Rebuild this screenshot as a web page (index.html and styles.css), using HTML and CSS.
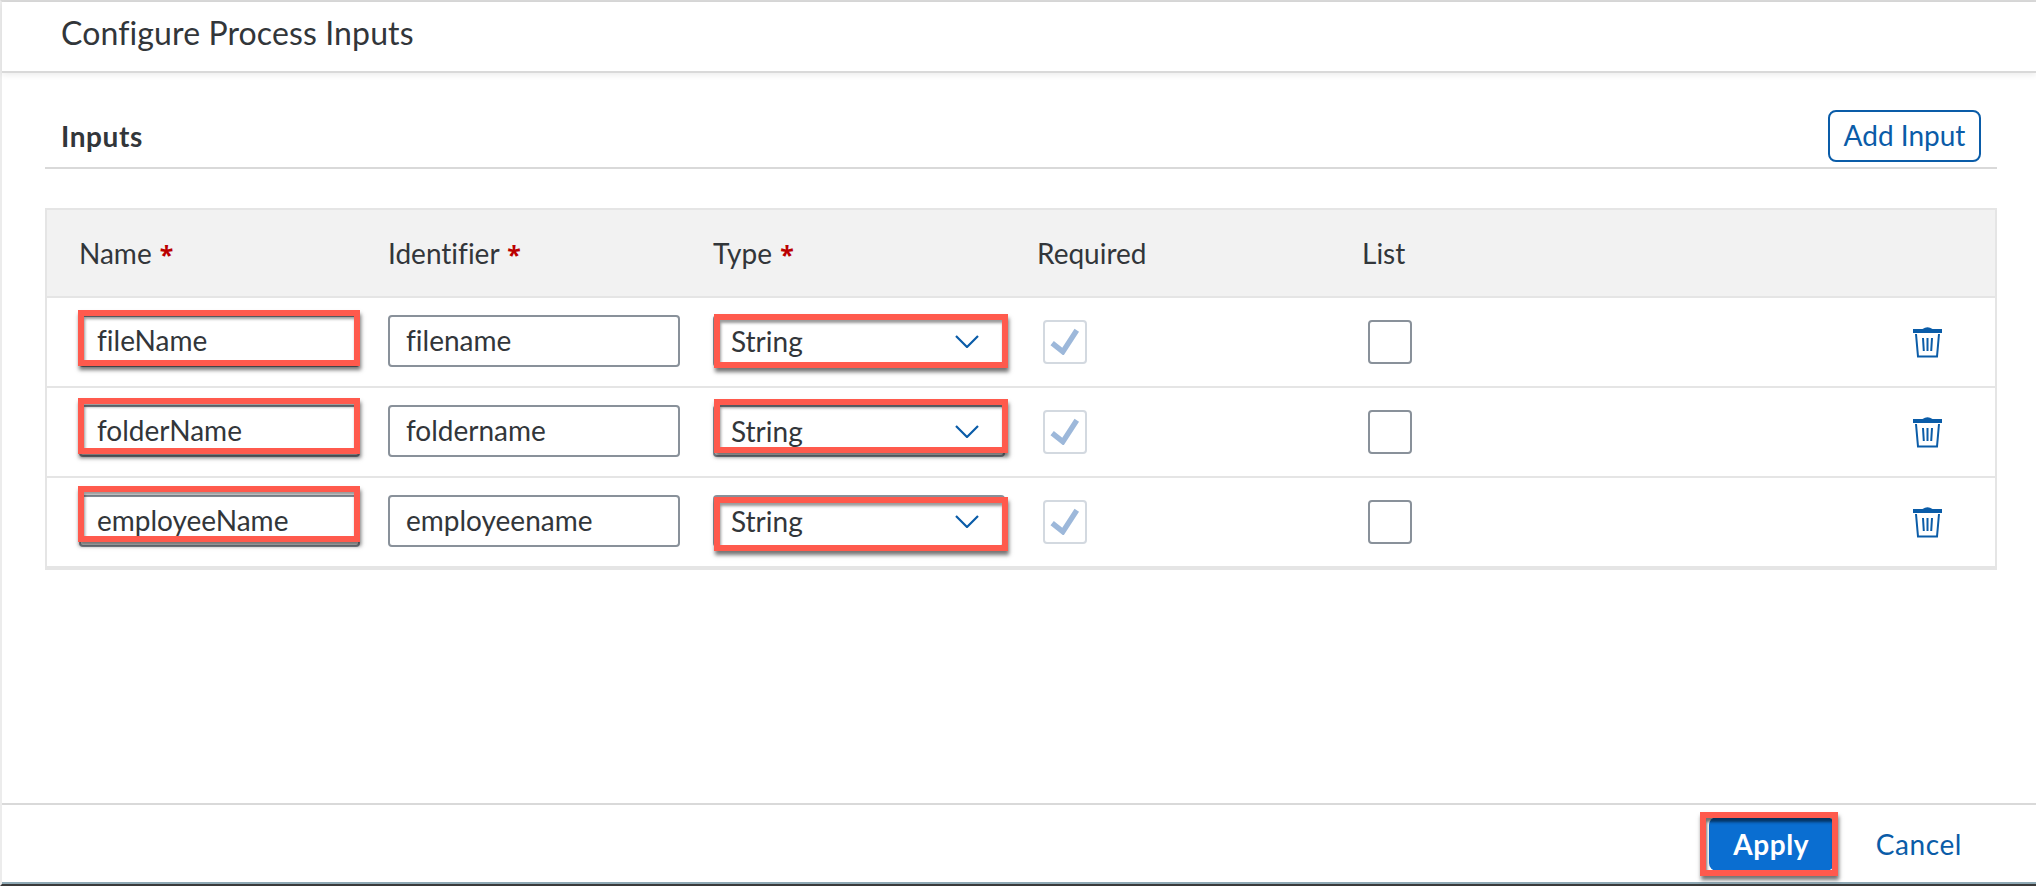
FILE: index.html
```html
<!DOCTYPE html>
<html>
<head>
    <title>Configure Process Inputs</title>
    <link rel="stylesheet" href="styles.css">
</head>
<body>

<div class="page">
    <header class="page-header">
        <h1>Configure Process Inputs</h1>
    </header>

    <main class="content">
        <div class="section-head">
            <h2>Inputs</h2>
            <button class="btn-outline">Add Input</button>
        </div>

        <div class="inputs-table">
            <div class="row head-row">
                <div>Name <span class="star">*</span></div>
                <div>Identifier <span class="star">*</span></div>
                <div>Type <span class="star">*</span></div>
                <div>Required</div>
                <div>List</div>
                <div></div>
            </div>

            <div class="row">
                <div class="cell"><div class="field">fileName</div><span class="mark mark-name-1"></span></div>
                <div class="cell"><div class="field">filename</div></div>
                <div class="cell">
                    <div class="field select">String
                        <svg class="chevron" viewBox="0 0 24 13"><path d="M1 1l11 11L23 1"/></svg>
                    </div>
                    <span class="mark mark-type mark-type-1"></span>
                </div>
                <div class="cell">
                    <div class="checkbox disabled">
                        <svg class="check" viewBox="0 0 28 25"><path d="M2 14l10 8L25 2"/></svg>
                    </div>
                </div>
                <div class="cell"><div class="checkbox"></div></div>
                <div class="cell">
                    <svg class="trash" viewBox="0 0 29 33"><path class="lid" d="M0 4h9.500q5-3.500 10 0H29v4H0z"/><path d="M3 9l2 22.500h19L26 9M10 13l.8 13M14.500 13v13M19 13l-.8 13"/></svg>
                </div>
            </div>

            <div class="row">
                <div class="cell"><div class="field">folderName</div><span class="mark mark-name-2"></span></div>
                <div class="cell"><div class="field">foldername</div></div>
                <div class="cell">
                    <div class="field select">String
                        <svg class="chevron" viewBox="0 0 24 13"><path d="M1 1l11 11L23 1"/></svg>
                    </div>
                    <span class="mark mark-type mark-type-2"></span>
                </div>
                <div class="cell">
                    <div class="checkbox disabled">
                        <svg class="check" viewBox="0 0 28 25"><path d="M2 14l10 8L25 2"/></svg>
                    </div>
                </div>
                <div class="cell"><div class="checkbox"></div></div>
                <div class="cell">
                    <svg class="trash" viewBox="0 0 29 33"><path class="lid" d="M0 4h9.500q5-3.500 10 0H29v4H0z"/><path d="M3 9l2 22.500h19L26 9M10 13l.8 13M14.500 13v13M19 13l-.8 13"/></svg>
                </div>
            </div>

            <div class="row">
                <div class="cell"><div class="field">employeeName</div><span class="mark mark-name-3"></span></div>
                <div class="cell"><div class="field">employeename</div></div>
                <div class="cell">
                    <div class="field select">String
                        <svg class="chevron" viewBox="0 0 24 13"><path d="M1 1l11 11L23 1"/></svg>
                    </div>
                    <span class="mark mark-type mark-type-3"></span>
                </div>
                <div class="cell">
                    <div class="checkbox disabled">
                        <svg class="check" viewBox="0 0 28 25"><path d="M2 14l10 8L25 2"/></svg>
                    </div>
                </div>
                <div class="cell"><div class="checkbox"></div></div>
                <div class="cell">
                    <svg class="trash" viewBox="0 0 29 33"><path class="lid" d="M0 4h9.500q5-3.500 10 0H29v4H0z"/><path d="M3 9l2 22.500h19L26 9M10 13l.8 13M14.500 13v13M19 13l-.8 13"/></svg>
                </div>
            </div>
        </div>
    </main>

    <footer class="page-footer">
        <div class="apply-wrap">
            <button class="btn-primary">Apply</button>
            <span class="mark mark-apply"></span>
        </div>
        <button class="btn-link">Cancel</button>
    </footer>
</div>

</body>
</html>
```

FILE: styles.css
```css
* {
    box-sizing: border-box;
}

html, body {
    margin: 0;
    height: 100%;
    overflow: hidden;
}

body {
    font-family: Lato, "Noto Sans", sans-serif;
    font-size: 28px;
    font-variant-ligatures: none;
    color: #32363a;
    background: #fff;
}

.page {
    height: 886px;
    display: flex;
    flex-direction: column;
    border-top: 2px solid #d9d9d9;
    border-left: 2px solid #ececec;
    border-bottom: 2px solid #3a3a3a;
}

.page-header {
    height: 71px;
    padding: 0 0 8px 59px;
    display: flex;
    align-items: center;
    border-bottom: 2px solid #d9d9d9;
    box-shadow: 0 2px 6px rgba(0, 0, 0, 0.08);
}

.page-header h1 {
    margin: 0;
    font-size: 32px;
    font-weight: 400;
    letter-spacing: 0.12px;
}

.content {
    flex: 1;
    padding: 37px 39px 0 43px;
}

.section-head {
    display: flex;
    justify-content: space-between;
    align-items: center;
    padding: 0 16px 5px;
    border-bottom: 2px solid #d9d9d9;
}

.section-head h2 {
    margin: 0;
    font-size: 28px;
    font-weight: 700;
    letter-spacing: 0.6px;
}

.btn-outline {
    width: 153px;
    height: 52px;
    padding: 0 0 2px;
    font: inherit;
    color: #0a5ca8;
    background: #fff;
    border: 2px solid #0a5ca8;
    border-radius: 8px;
}

.inputs-table {
    margin-top: 39px;
    border: 2px solid #e5e5e5;
}

.row {
    display: grid;
    grid-template-columns: 309px 325px 324px 325px 1fr 29px;
    align-items: center;
    height: 90px;
    padding: 0 53px 2px 32px;
    border-bottom: 2px solid #e5e5e5;
}

.head-row {
    height: 88px;
    padding-bottom: 0;
    background: #f2f2f2;
}

.star {
    margin-left: 1px;
    font-family: "Noto Sans", sans-serif;
    font-size: 25px;
    font-weight: 700;
    color: #b00;
}

.cell {
    position: relative;
}

.field {
    height: 52px;
    padding: 0 16px 2px;
    display: flex;
    align-items: center;
    justify-content: space-between;
    background: #fff;
    border: 2px solid #89919a;
    border-radius: 4px;
}

.row .cell:nth-child(1) .field {
    width: 281px;
}

.row .cell:nth-child(2) .field {
    width: 292px;
}

.row .cell:nth-child(3) .field {
    width: 292px;
}

.select {
    padding: 0 24px 0 16px;
}

.chevron {
    width: 24px;
    height: 13px;
    fill: none;
    stroke: #0a5ca8;
    stroke-width: 2.2;
}

.checkbox {
    width: 44px;
    height: 44px;
    margin: 1px 0 0 6px;
    display: flex;
    align-items: center;
    justify-content: center;
    border: 2px solid #89919a;
    border-radius: 4px;
}

.checkbox.disabled {
    border-color: #d3d9e0;
}

.check {
    width: 30px;
    height: 27px;
    fill: none;
    stroke: #9db8da;
    stroke-width: 5;
}

.trash {
    display: block;
    width: 29px;
    height: 33px;
    fill: none;
    stroke: #0a5ca8;
    stroke-width: 2;
}

.trash .lid {
    fill: #0a5ca8;
    stroke: none;
}

/* red annotation boxes drawn over the screenshot */
.mark {
    position: absolute;
    left: -1px;
    width: 282px;
    height: 56px;
    border: 6px solid #ff5a4d;
    box-shadow: 1px 4px 4px rgba(0, 0, 0, 0.55), inset 1px 3px 3px rgba(0, 0, 0, 0.4);
}

.mark-name-1 {
    top: -5px;
}

.mark-name-2 {
    top: -7px;
}

.mark-name-3 {
    top: -9px;
}

.mark-type {
    left: 1px;
    width: 294px;
    height: 54px;
}

.mark-type-1 {
    top: -1px;
}

.mark-type-2 {
    top: -6px;
}

.mark-type-3 {
    top: 2px;
}

.page-footer {
    height: 81px;
    padding: 1px 74px 0 0;
    display: flex;
    justify-content: flex-end;
    align-items: center;
    border-top: 2px solid #d9d9d9;
    border-bottom: 2px solid #8fa9b5;
}

.apply-wrap {
    position: relative;
    margin-right: 42px;
}

.btn-primary {
    display: block;
    width: 125px;
    height: 54px;
    padding: 0;
    font: inherit;
    font-weight: 700;
    letter-spacing: 0.6px;
    color: #fff;
    background: #0a6ed1;
    border: 0;
    border-radius: 8px;
}

.mark-apply {
    top: -5px;
    left: -9px;
    width: 138px;
    height: 64px;
    box-shadow: 1px 4px 4px rgba(0, 0, 0, 0.55), inset 1px 4px 3px rgba(0, 0, 0, 0.55);
}

.btn-link {
    padding: 0;
    font: inherit;
    letter-spacing: 0.6px;
    color: #0a5ca8;
    background: none;
    border: 0;
}
```
